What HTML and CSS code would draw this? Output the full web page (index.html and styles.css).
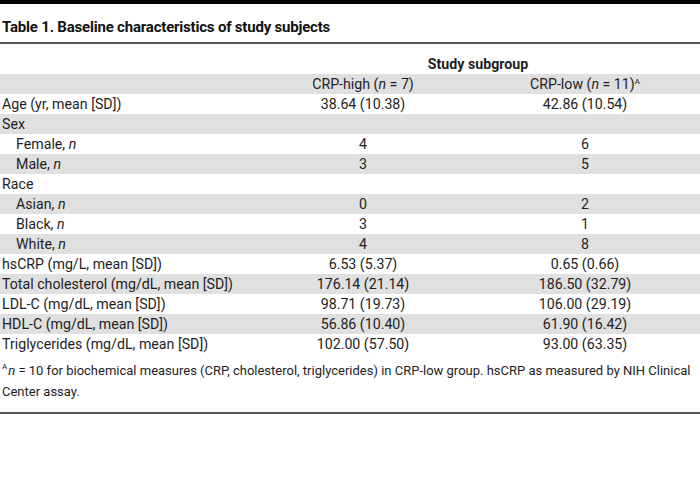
FILE: index.html
```html
<!DOCTYPE html>
<html>
<head>
<meta charset="utf-8">
<link rel="stylesheet" href="styles.css">
</head>
<body>
<div class="page">
  <div class="topbar"></div>
  <h1 class="title">Table 1. Baseline characteristics of study subjects</h1>
  <div class="rule"></div>
  <table class="tbl">
    <colgroup><col class="c1"><col class="c2"><col class="c3"></colgroup>
    <thead>
      <tr class="group"><th></th><th colspan="2">Study subgroup</th></tr>
      <tr class="shade head"><th></th><th>CRP-high (<i>n</i> = 7)</th><th>CRP-low (<i>n</i> = 11)<sup>A</sup></th></tr>
    </thead>
    <tbody>
      <tr><td>Age (yr, mean [SD])</td><td>38.64 (10.38)</td><td>42.86 (10.54)</td></tr>
      <tr class="shade"><td>Sex</td><td></td><td></td></tr>
      <tr><td class="ind">Female, <i>n</i></td><td>4</td><td>6</td></tr>
      <tr class="shade"><td class="ind">Male, <i>n</i></td><td>3</td><td>5</td></tr>
      <tr><td>Race</td><td></td><td></td></tr>
      <tr class="shade"><td class="ind">Asian, <i>n</i></td><td>0</td><td>2</td></tr>
      <tr><td class="ind">Black, <i>n</i></td><td>3</td><td>1</td></tr>
      <tr class="shade"><td class="ind">White, <i>n</i></td><td>4</td><td>8</td></tr>
      <tr><td>hsCRP (mg/L, mean [SD])</td><td>6.53 (5.37)</td><td>0.65 (0.66)</td></tr>
      <tr class="shade"><td>Total cholesterol (mg/dL, mean [SD])</td><td>176.14 (21.14)</td><td>186.50 (32.79)</td></tr>
      <tr><td>LDL-C (mg/dL, mean [SD])</td><td>98.71 (19.73)</td><td>106.00 (29.19)</td></tr>
      <tr class="shade"><td>HDL-C (mg/dL, mean [SD])</td><td>56.86 (10.40)</td><td>61.90 (16.42)</td></tr>
      <tr><td>Triglycerides (mg/dL, mean [SD])</td><td>102.00 (57.50)</td><td>93.00 (63.35)</td></tr>
    </tbody>
  </table>
  <p class="note"><span class="fn">A</span><i>n</i> = 10 for biochemical measures (CRP, cholesterol, triglycerides) in CRP-low group. hsCRP as measured by NIH Clinical Center assay.</p>
  <div class="rule"></div>
</div>
</body>
</html>
```
FILE: styles.css
```css
html, body {
  margin: 0;
  padding: 0;
  background: #fff;
}
.page {
  width: 700px;
  font-family: Roboto, "Liberation Sans", sans-serif;
  font-size: 14.2px;
  color: #1e1e1e;
}
.topbar {
  height: 4px;
  background: #000;
}
.title {
  margin: 0;
  padding: 13px 0 0 2px;
  height: 25px;
  font-size: 15px;
  font-weight: 700;
  letter-spacing: -0.2px;
  line-height: 20px;
  color: #111;
}
.rule {
  height: 2px;
  background: #555;
}
.tbl {
  width: 700px;
  border-collapse: collapse;
  margin-top: 10px;
  table-layout: fixed;
}
.c1 { width: 256px; }
.c2 { width: 214px; }
.c3 { width: 230px; }
.tbl th, .tbl td {
  padding: 0;
  height: 20px;
  line-height: 20px;
  font-weight: 400;
  text-align: center;
  white-space: nowrap;
}
.tbl td:first-child {
  text-align: left;
  padding-left: 2px;
}
.tbl td.ind {
  padding-left: 16px;
}
.tbl tr.group th {
  font-weight: 700;
}
.shade {
  background: #e0e0e0;
}
sup {
  font-size: 8px;
  line-height: 0;
  vertical-align: 5px;
}
.fn {
  display: inline-block;
  font-size: 8px;
  line-height: 8px;
  vertical-align: top;
  margin-top: 3px;
  margin-right: 1px;
}
.note {
  margin: 0;
  padding: 6px 0 10px 2px;
  font-size: 13px;
  line-height: 21px;
}
```
